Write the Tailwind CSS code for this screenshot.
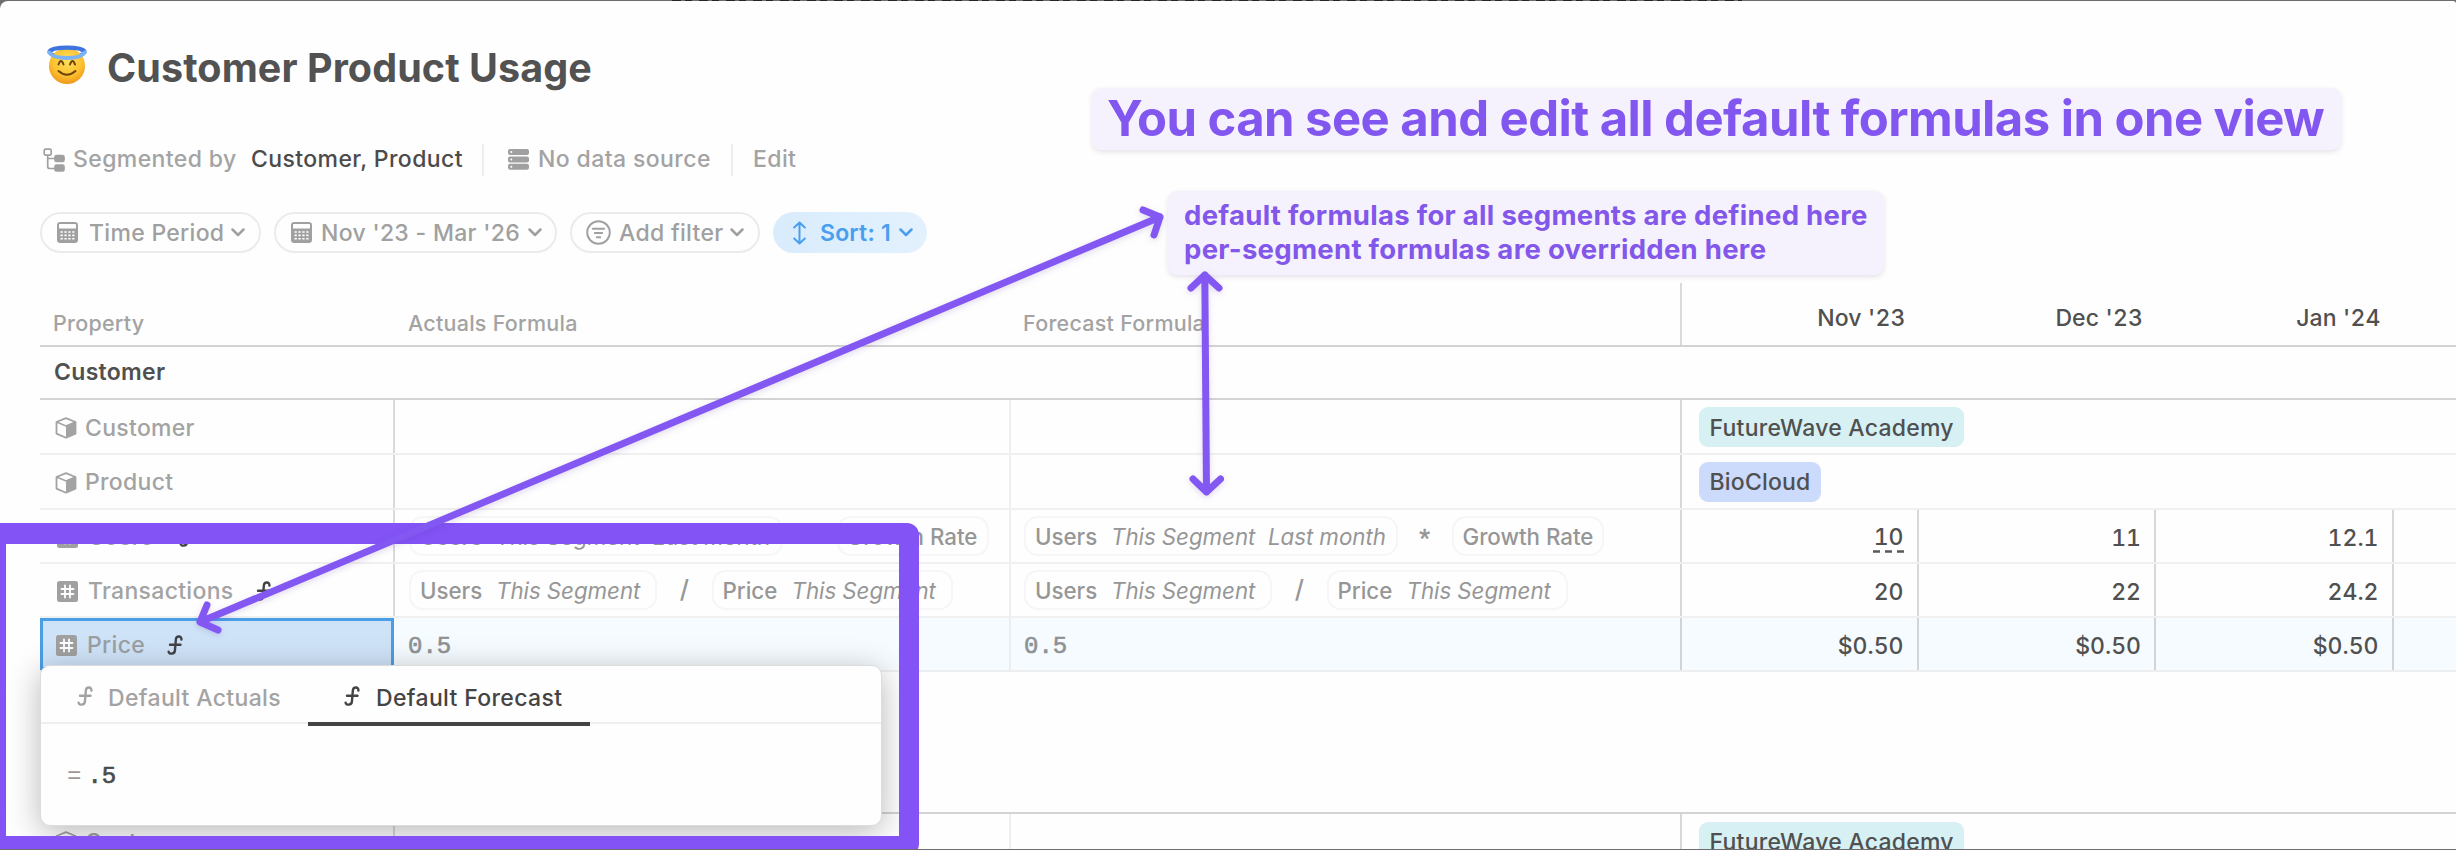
<!DOCTYPE html>
<html lang="en">
<head>
<meta charset="utf-8">
<title>Customer Product Usage</title>
<script src="https://cdn.jsdelivr.net/npm/@tailwindcss/browser@4"></script>
</head>
<body class="relative h-[850px] w-[2456px] overflow-hidden bg-[#6f6c70] font-['Inter',sans-serif] text-[23px] font-[450] text-[#505050]">

<!-- shared icons -->
<svg class="absolute size-0">
  <symbol id="cube" viewBox="0 0 22 22"><path d="M11 1.200 20.500 5v11.600L11 20.800 1.500 16.600V5Z" fill="none" stroke="#a3a3a3" stroke-width="1.800" stroke-linejoin="round"/><path d="M1.500 5 11 9 20.500 5" fill="none" stroke="#a3a3a3" stroke-width="1.600"/><path d="M11 9 20.500 5v11.600L11 20.800Z" fill="#a3a3a3"/></symbol>
  <symbol id="hash" viewBox="0 0 21 21"><rect width="21" height="21" rx="2.500" fill="#a0a0a0"/><path d="M8 4.500v12M13 4.500v12M4.500 8h12M4.500 13h12" stroke="#fff" stroke-width="1.800" stroke-linecap="round"/></symbol>
  <symbol id="fn" viewBox="0 0 16 20"><path d="M14.400 4.600C14.800.6 9.300.4 8.900 4.200L7.900 15.600C7.600 19.400 1.600 19.600 1.600 16.600M3 9.700h10.500" fill="none" stroke="currentColor" stroke-width="2.400" stroke-linecap="round"/></symbol>
  <symbol id="chev" viewBox="0 0 14 9"><path d="M1.500 1.500 7 7 12.500 1.500" fill="none" stroke="currentColor" stroke-width="2.500" stroke-linecap="round" stroke-linejoin="round"/></symbol>
  <symbol id="calc" viewBox="0 0 21 21"><rect x=".8" y=".8" width="19.400" height="19.400" rx="2.500" fill="#a0a0a0" stroke="#a0a0a0" stroke-width="1.600"/><rect x="2" y="2" width="17" height="4.600" rx=".8" fill="#fff"/><path d="M3.500 10h14M3.500 13.400h14M3.500 16.800h14" stroke="#fff" stroke-width="1.600" stroke-dasharray="2.300 1.600"/></symbol>
</svg>

<!-- sliver of the page behind -->
<div class="absolute left-[672px] top-0 h-px w-[1070px] bg-[repeating-linear-gradient(90deg,#262427_0_9px,#6f6c70_9px_13px,#262427_13px_20px,#6f6c70_20px_27px)]"></div>

<main class="mt-px flex h-[848px] flex-col overflow-hidden rounded-tl-[8px] rounded-tr-[3px] rounded-bl-[8px] bg-[#fefefe]">
  <header class="flex h-[282px] shrink-0 flex-col pl-10">
    <div class="mt-[41px] flex h-[50px] items-center">
      <svg class="-mt-1 ml-[7px] h-10 w-10" viewBox="0 0 40 40"><defs><radialGradient id="face" cx=".5" cy=".35" r=".65"><stop offset="0" stop-color="#ffe15c"/><stop offset=".65" stop-color="#fcc02e"/><stop offset="1" stop-color="#ee981c"/></radialGradient></defs><ellipse cx="20" cy="6.500" rx="18" ry="4.500" fill="none" stroke="#3f74e0" stroke-width="3"/><circle cx="20" cy="21" r="18" fill="url(#face)"/><path d="M2.200 7.500C5 12 12 13 20 13s15-1 17.800-5.500" fill="none" stroke="#7cb4f3" stroke-width="4" stroke-linecap="round"/><path d="M5 5.500C9 2.500 31 2.500 35 5.500" fill="none" stroke="#3f74e0" stroke-width="3" stroke-linecap="round"/><path d="M11.500 19.500Q14 12.500 16.500 19.500M23 19.500Q25.500 12.500 28 19.500M11.500 26Q20 33.500 28.500 26" fill="none" stroke="#6f430c" stroke-width="2" stroke-linecap="round"/></svg>
      <h1 class="mt-[3px] ml-[20px] text-[39.500px] font-bold tracking-[0.080px] whitespace-nowrap text-[#525252]">Customer Product Usage</h1>
    </div>
    <div class="mt-[51px] flex h-[33px] items-center tracking-[0.400px] whitespace-nowrap text-[#a3a3a3]">
      <svg class="ml-[3px] h-6 w-[22px]" viewBox="0 0 22 24" fill="none" stroke="#a0a0a0" stroke-width="1.700"><rect x="1.200" y="1.200" width="7" height="6" rx="1.500"/><path d="M4.700 7.200v11.300q0 2 2 2h6M4.700 10.500h8"/><rect x="12" y="7.500" width="9" height="6" rx="1.500" fill="#a0a0a0"/><rect x="12" y="17" width="9" height="6" rx="1.500" fill="#a0a0a0"/></svg>
      <span class="ml-[8px] w-[178px]">Segmented by</span>
      <span class="w-[231px] font-medium text-[#4b4b4b]">Customer, Product</span>
      <span class="h-8 w-[2px] bg-[#ededed]"></span>
      <svg class="ml-[24px] h-[21px] w-[21px]" viewBox="0 0 21 21"><g fill="#a0a0a0"><rect width="21" height="6" rx="2"/><rect y="7.400" width="21" height="6" rx="2"/><rect y="14.800" width="21" height="6" rx="2"/></g><g fill="#fff"><circle cx="3.300" cy="3" r="1"/><circle cx="3.300" cy="10.400" r="1"/><circle cx="3.300" cy="17.800" r="1"/></g></svg>
      <span class="ml-[9px] w-[193px]">No data source</span>
      <span class="h-8 w-[2px] bg-[#ededed]"></span>
      <span class="ml-[20px]">Edit</span>
    </div>
    <div class="mt-[36px] flex h-[41px] gap-[13px] tracking-[0.300px] whitespace-nowrap text-[#a0a0a0]">
      <div class="flex w-[221px] items-center rounded-full border-2 border-[#ebebeb] pl-[15px]"><svg class="size-[21px]"><use href="#calc"/></svg><span class="mt-[2px] ml-[11px] w-[142px]">Time Period</span><svg class="h-[9px] w-[14px]"><use href="#chev"/></svg></div>
      <div class="flex w-[283px] items-center rounded-full border-2 border-[#ebebeb] pl-[15px]"><svg class="size-[21px]"><use href="#calc"/></svg><span class="mt-[2px] ml-[9px] w-[207px]">Nov '23 - Mar '26</span><svg class="h-[9px] w-[14px]"><use href="#chev"/></svg></div>
      <div class="flex w-[190px] items-center rounded-full border-2 border-[#ebebeb] pl-[14px]"><svg class="size-[25px]" viewBox="0 0 25 25" fill="none" stroke="#a0a0a0" stroke-width="1.900" stroke-linecap="round"><circle cx="12.500" cy="12.500" r="11.300"/><path d="M6.800 8.800h11.400M8.800 13h7.400M10.800 17.200h3.400"/></svg><span class="mt-[2px] ml-[8px] w-[111px]">Add filter</span><svg class="h-[9px] w-[14px]"><use href="#chev"/></svg></div>
      <div class="flex w-[154px] items-center rounded-full bg-linear-to-r from-[#d9ecfc] to-[#e3f1fd] pl-[20px] font-semibold tracking-[0.200px] text-[#4a9eee]"><svg class="h-6 w-[13px]" viewBox="0 0 13 24" fill="none" stroke="currentColor" stroke-width="2" stroke-linecap="round" stroke-linejoin="round"><path d="M6.500 1.500v21M1.200 6.500l5.300-5 5.300 5M1.200 17.500l5.300 5 5.300-5"/></svg><span class="mt-[2px] ml-[14px] w-[79px]">Sort: 1</span><svg class="h-[9px] w-[14px]"><use href="#chev"/></svg></div>
    </div>
  </header>

  <section class="ml-10 flex flex-col tabular-nums whitespace-nowrap">
    <!-- column headings -->
    <div class="flex h-[64px] border-b-2 border-[#d3d3d3] text-[21.500px] tracking-[0.250px] text-[#a3a3a3]">
      <div class="w-[353px] pt-[24px] pl-[13px]">Property</div>
      <div class="w-[616px] pt-[24px] pl-[15px]">Actuals Formula</div>
      <div class="w-[670.500px] pt-[24px] pl-[14px]">Forecast Formula</div>
      <div class="flex flex-1 border-l-2 border-[#dadada] pt-[18px] text-right text-[23px] tracking-[0.150px] text-[#505050]">
        <div class="w-[237px] pr-[13px]">Nov '23</div><div class="w-[237.500px] pr-[13px]">Dec '23</div><div class="w-[237.500px] pr-[13px]">Jan '24</div>
      </div>
    </div>
    <div class="flex h-[53px] items-center border-b-2 border-[#d3d3d3] pl-[14px] text-[23px] font-semibold tracking-[0.300px]">Customer</div>

    <div class="flex h-[55px] border-b-2 border-[#f0f0f0]">
      <div class="flex w-[353px] items-center pt-[3px] pl-[15px] tracking-[0.300px] text-[#a3a3a3]"><svg class="mr-[8px] size-[22px]"><use href="#cube"/></svg>Customer</div>
      <div class="w-[616px] border-l-2 border-[#dadada]"></div>
      <div class="w-[670.500px] border-l-2 border-[#efefef]"></div>
      <div class="flex flex-1 items-center border-l-2 border-[#d8d8d8] pt-px pl-[17px]"><span class="flex h-10 w-[265px] items-center rounded-[9px] bg-[#d6f0f3] pt-[2px] pl-[11px] tracking-[0.250px]">FutureWave Academy</span></div>
    </div>
    <div class="flex h-[55px] border-b-2 border-[#f0f0f0]">
      <div class="flex w-[353px] items-center pt-[2px] pl-[15px] tracking-[0.300px] text-[#a3a3a3]"><svg class="mr-[8px] size-[22px]"><use href="#cube"/></svg>Product</div>
      <div class="w-[616px] border-l-2 border-[#dadada]"></div>
      <div class="w-[670.500px] border-l-2 border-[#efefef]"></div>
      <div class="flex flex-1 items-center border-l-2 border-[#d8d8d8] pl-[17px]"><span class="flex h-10 w-[122px] items-center rounded-[9px] bg-[#ccdafb] pt-[2px] pl-[11px] tracking-[0.200px]">BioCloud</span></div>
    </div>

    <div class="flex h-[54px] border-b-2 border-[#f0f0f0]">
      <div class="flex w-[353px] items-center pt-[2px] pl-[17px] tracking-[0.300px] text-[#a3a3a3]"><svg class="mr-[10px] size-[21px]"><use href="#hash"/></svg>Users<svg class="ml-[25px] h-5 w-4 text-[#444]"><use href="#fn"/></svg></div>
      <div class="flex w-[616px] items-center border-l-2 border-[#dadada] pl-[14px] text-[22.300px] text-[#969696]">
        <span class="flex h-10 w-[374px] items-center rounded-[14px] border-2 border-[#f6f6f6] pt-[2px] pl-[9px]"><span class="w-[76px]">Users</span><i class="w-[157px]">This Segment</i><i>Last month</i></span>
        <span class="w-[53.500px] pt-2 text-center font-['Liberation_Mono',monospace] text-[25px]">*</span>
        <span class="flex h-10 w-[152px] items-center rounded-[14px] border-2 border-[#f6f6f6] pt-[2px] pl-[8px]">Growth Rate</span>
      </div>
      <div class="flex w-[670.500px] items-center border-l-2 border-[#efefef] pl-[13px] text-[22.300px] text-[#969696]">
        <span class="flex h-10 w-[374px] items-center rounded-[14px] border-2 border-[#f6f6f6] pt-[2px] pl-[9px]"><span class="w-[76px]">Users</span><i class="w-[157px]">This Segment</i><i>Last month</i></span>
        <span class="w-[53.500px] pt-3 text-center font-['Liberation_Mono',monospace] text-[28px] leading-none [-webkit-text-stroke:0.500px_#969696]">*</span>
        <span class="flex h-10 w-[152px] items-center rounded-[14px] border-2 border-[#f6f6f6] pt-[2px] pl-[9px]">Growth Rate</span>
      </div>
      <div class="flex flex-1 border-l-2 border-[#d8d8d8] text-right leading-[56px]">
        <div class="flex w-[237px] items-center justify-end border-r-2 border-[#d8d8d8] pt-[2px] pr-[13px] leading-none"><span class="relative">10<svg class="absolute -left-px top-[24px] h-[3px] w-[31px]"><path d="M0 1.500h31" stroke="#5a5a5a" stroke-width="2.500" stroke-dasharray="7 5"/></svg></span></div>
        <div class="w-[237.500px] border-r-2 border-[#d8d8d8] pr-[13px]">11</div><div class="w-[237.500px] border-r-2 border-[#d8d8d8] pr-[13px]">12.1</div>
      </div>
    </div>

    <div class="flex h-[54px] border-b-2 border-[#f0f0f0]">
      <div class="flex w-[353px] items-center pt-[2px] pl-[17px] tracking-[0.300px] text-[#a3a3a3]"><svg class="mr-[10px] size-[21px]"><use href="#hash"/></svg><span class="w-[167px]">Transactions</span><svg class="h-5 w-4 text-[#444]"><use href="#fn"/></svg></div>
      <div class="flex w-[616px] items-center border-l-2 border-[#dadada] pl-[14px] text-[22.300px] text-[#969696]">
        <span class="flex h-10 w-[248px] items-center rounded-[14px] border-2 border-[#f6f6f6] pt-[2px] pl-[9px]"><span class="w-[76px]">Users</span><i>This Segment</i></span>
        <span class="w-[54.500px] text-center text-[25px]">/</span>
        <span class="flex h-10 w-[241px] items-center rounded-[14px] border-2 border-[#f6f6f6] pt-[2px] pl-[9px]"><span class="w-[69px]">Price</span><i>This Segment</i></span>
      </div>
      <div class="flex w-[670.500px] items-center border-l-2 border-[#efefef] pl-[13px] text-[22.300px] text-[#969696]">
        <span class="flex h-10 w-[248px] items-center rounded-[14px] border-2 border-[#f6f6f6] pt-[2px] pl-[9px]"><span class="w-[76px]">Users</span><i>This Segment</i></span>
        <span class="w-[54.500px] text-center text-[25px]">/</span>
        <span class="flex h-10 w-[241px] items-center rounded-[14px] border-2 border-[#f6f6f6] pt-[2px] pl-[9px]"><span class="w-[69px]">Price</span><i>This Segment</i></span>
      </div>
      <div class="flex flex-1 border-l-2 border-[#d8d8d8] text-right leading-[56px]">
        <div class="w-[237px] border-r-2 border-[#d8d8d8] pr-[13px]">20</div><div class="w-[237.500px] border-r-2 border-[#d8d8d8] pr-[13px]">22</div><div class="w-[237.500px] border-r-2 border-[#d8d8d8] pr-[13px]">24.2</div>
      </div>
    </div>

    <div class="flex h-[54px] border-b-2 border-[#eceef0] bg-[#f5fbfe]">
      <div class="flex w-[354px] items-center border-[3px] border-[#4a9ee6] bg-[#cfe3f8] pt-[2px] pl-[13px] tracking-[0.300px] text-[#9b9fa3]"><svg class="mr-[10px] size-[21px]"><use href="#hash"/></svg><span class="w-[80px]">Price</span><svg class="h-5 w-4 text-[#3f4347]"><use href="#fn"/></svg></div>
      <div class="w-[615px] pl-[14px] font-['Liberation_Mono',monospace] text-[24px] leading-[57px] text-[#8f9294] [-webkit-text-stroke:0.6px_#8f9294]">0.5</div>
      <div class="w-[670.500px] border-l-2 border-[#ebeef0] pl-[13px] font-['Liberation_Mono',monospace] text-[24px] leading-[57px] text-[#8f9294] [-webkit-text-stroke:0.6px_#8f9294]">0.5</div>
      <div class="flex flex-1 border-l-2 border-[#d2d5d7] text-right leading-[56px]">
        <div class="w-[237px] border-r-2 border-[#d2d5d7] pr-[13px]">$0.50</div><div class="w-[237.500px] border-r-2 border-[#d2d5d7] pr-[13px]">$0.50</div><div class="w-[237.500px] border-r-2 border-[#d2d5d7] pr-[13px]">$0.50</div>
      </div>
    </div>

    <div class="h-[142px] border-b-2 border-[#d3d3d3]"></div>
    <div class="flex h-[55px]">
      <div class="flex w-[353px] items-center pt-px pl-[15px] tracking-[0.300px] text-[#a3a3a3]"><svg class="mr-[8px] size-[22px]"><use href="#cube"/></svg>Customer</div>
      <div class="w-[616px] border-l-2 border-[#dadada]"></div>
      <div class="w-[670.500px] border-l-2 border-[#efefef]"></div>
      <div class="flex flex-1 items-center border-l-2 border-[#d8d8d8] pl-[17px]"><span class="flex h-10 w-[265px] items-center rounded-[9px] bg-[#d6f0f3] pt-[2px] pl-[11px] tracking-[0.250px]">FutureWave Academy</span></div>
    </div>
  </section>
</main>

<!-- formula editor popover -->
<div class="absolute left-[40px] top-[665px] flex h-[161px] w-[842px] flex-col rounded-[10px] border border-[#dcdcdc] bg-[#fefefe] whitespace-nowrap shadow-[0_6px_32px_rgba(0,0,0,0.28)]">
  <div class="flex h-[58px] border-b-2 border-[#efefef] tracking-[0.350px]">
    <div class="flex w-[267px] items-center pt-[8px] pl-[36px] text-[#a3a3a3]"><svg class="mr-[15px] -mt-1 h-5 w-4"><use href="#fn"/></svg><span>Default Actuals</span></div>
    <div class="flex h-[60px] w-[282px] items-center border-b-[4px] border-[#444] pt-[8px] pl-[36px] font-medium text-[#444]"><svg class="mr-[16px] -mt-1 h-5 w-4"><use href="#fn"/></svg><span>Default Forecast</span></div>
  </div>
  <div class="flex flex-1 items-center pt-[4px] pl-[26px] font-['Liberation_Mono',monospace] text-[24px] text-[#4b4b4b]"><span class="mr-[6px] text-[#999]">=</span><span class="[-webkit-text-stroke:0.7px_#4b4b4b]">.5</span></div>
</div>

<!-- annotations -->
<div class="absolute -left-[14px] top-[523px] h-[333px] w-[933px] rounded-[12px] border-[20px] border-t-[21px] border-[#8353f5]"></div>
<div class="absolute bottom-0 left-0 h-px w-full bg-[#6f6c70]"></div>
<div class="absolute left-[1092px] top-[88px] flex h-[62px] w-[1249px] items-center rounded-[9px] bg-[#f5f2fe] pl-[15px] text-[49px] font-bold tracking-[-0.550px] whitespace-nowrap text-[#8257f0] shadow-[0_2px_5px_rgba(60,40,90,0.13)]">You can see and edit all default formulas in one view</div>
<div class="absolute left-[1168px] top-[191px] h-[84px] w-[716px] rounded-[9px] bg-[#f5f2fe] pt-[7px] pl-[16px] text-[27.500px] leading-[34.400px] font-bold tracking-[0.290px] whitespace-nowrap text-[#8257ea] shadow-[0_2px_5px_rgba(60,40,90,0.13)]">default formulas for all segments are defined here<br>per-segment formulas are overridden here</div>
<svg class="absolute left-0 top-0 h-[849px] w-[2456px] drop-shadow-[0_2px_3px_rgba(90,50,160,0.18)]" fill="none" stroke="#8257f2" stroke-width="7" stroke-linecap="round" stroke-linejoin="round">
  <path d="M200 622 1160 217M207 605 200 622 218 630M1143 210 1160 217 1154 235"/>
  <path d="M1204.800 275 1206.500 492M1191 288 1204.800 275 1219 288M1193 479 1206.500 492 1220.500 479"/>
</svg>
</body>
</html>
